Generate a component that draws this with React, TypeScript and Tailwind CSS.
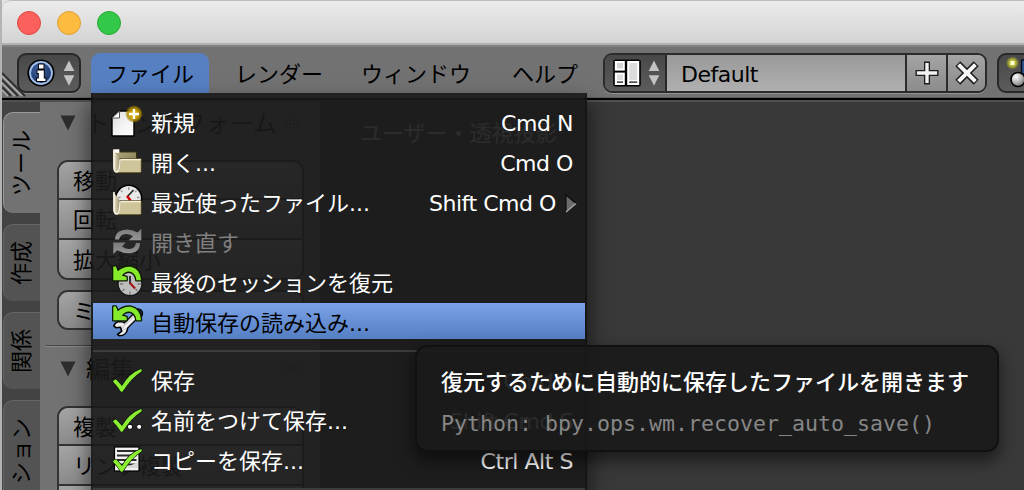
import React from "react";

type IconProps = { children: React.ReactNode };

const Icon = ({ children }: IconProps) => (
  <svg className="h-10 w-10 shrink-0" viewBox="0 0 40 40" fill="none">
    {children}
  </svg>
);

const Gradients = () => (
  <svg className="absolute h-0 w-0" aria-hidden="true">
    <defs>
      <linearGradient id="paper" x1="0" y1="0" x2="1" y2="1">
        <stop offset="0" stopColor="#d8d8d8" />
        <stop offset="0.5" stopColor="#f2f2f2" />
        <stop offset="1" stopColor="#ffffff" />
      </linearGradient>
      <linearGradient id="folderBack" x1="0" y1="0" x2="1" y2="1">
        <stop offset="0" stopColor="#b9af84" />
        <stop offset="1" stopColor="#857b55" />
      </linearGradient>
      <linearGradient id="flap" x1="0" y1="0" x2="1" y2="0">
        <stop offset="0" stopColor="#f3eedb" />
        <stop offset="1" stopColor="#9c926a" />
      </linearGradient>
      <linearGradient id="reload" x1="0" y1="0" x2="0" y2="1">
        <stop offset="0" stopColor="#7a7a7a" />
        <stop offset="1" stopColor="#969696" />
      </linearGradient>
      <radialGradient id="glow">
        <stop offset="0.4" stopColor="#d2a800" />
        <stop offset="0.75" stopColor="#a88500" stopOpacity="0.8" />
        <stop offset="1" stopColor="#8a6d00" stopOpacity="0" />
      </radialGradient>
      <radialGradient id="info" cx="0.4" cy="0.3" r="0.8">
        <stop offset="0" stopColor="#3c5f9c" />
        <stop offset="1" stopColor="#1c3566" />
      </radialGradient>
      <radialGradient id="ball" cx="0.35" cy="0.3" r="0.8">
        <stop offset="0" stopColor="#ffffff" />
        <stop offset="1" stopColor="#6e6e6e" />
      </radialGradient>
      <radialGradient id="lamp">
        <stop offset="0.3" stopColor="#c9c838" />
        <stop offset="0.6" stopColor="#a9a83a" />
        <stop offset="1" stopColor="#8a8930" stopOpacity="0.2" />
      </radialGradient>
    </defs>
  </svg>
);

const FolderFront = ({ dy = 0 }: { dy?: number }) => (
  <g transform={`translate(0 ${dy})`}>
    <path d="M6.3 7L12.8 15.5L12.5 26Q11 30.5 8 28.5Q6.3 27 6.3 24Z" fill="url(#flap)" />
    <path d="M13 15.7H34.3V28.5Q34.3 29.8 33 29.8H9.5Q13.5 28.5 13 15.7Z" fill="#cfc59b" stroke="#3b310a" strokeWidth="0.8" />
    <path d="M13.4 16.6H34" stroke="#f3efd9" strokeWidth="1.4" />
    <path d="M7 7V25Q7.3 29.5 10 29Q13 28 13 16.4" stroke="#f6f1de" strokeWidth="1.5" />
  </g>
);

const NewIcon = () => (
  <Icon>
    <path d="M12.5 8H27V33H5V15Z" fill="url(#paper)" stroke="#000" strokeWidth="1.4" />
    <path d="M12.5 8V15H5Z" fill="#fff" stroke="#555" strokeWidth="1" />
    <circle cx="27" cy="11" r="9" fill="url(#glow)" />
    <path d="M27 6V16M22 11H32" stroke="#fff" strokeWidth="2.4" />
  </Icon>
);

const FolderIcon = () => (
  <Icon>
    <path d="M6.3 6.5H12.3V9H29.5V20H6.3Z" fill="url(#folderBack)" stroke="#3b310a" strokeWidth="1" />
    <path d="M6.3 6.3H12.3V9.8H6.3Z" fill="#fff" />
    <FolderFront />
  </Icon>
);

const RecentIcon = () => (
  <Icon>
    <circle cx="21.7" cy="15.3" r="13" fill="#e8e8e8" stroke="#000" strokeWidth="1.6" />
    <path d="M21.7 4V7M11 14.5H13.5M30 14.5H32.5M13.8 7.5L15.5 9M29.7 7.5L28 9" stroke="#999" strokeWidth="1.3" />
    <path d="M20.5 13.5L26.5 7" stroke="#222" strokeWidth="1.6" />
    <path d="M20 13L23.5 17.5" stroke="#d40000" strokeWidth="2.6" />
    <FolderFront dy={2} />
  </Icon>
);

const ReloadIcon = () => (
  <Icon>
    <path
      d="M8 16.5Q8 11 12.5 8.3Q21 4 30.5 9.5L34.3 5.7V17.3H21.7L26 13.3Q20 9.5 15 12Q12.5 13.5 12 16.5Z"
      fill="url(#reload)"
    />
    <path
      d="M33 20Q33 26 28.5 28.8Q20 32.5 10.3 27.2L6.3 31V19.5H18.8L15 23.4Q21 27.5 26 25Q28.7 23.2 29 20Z"
      fill="url(#reload)"
    />
  </Icon>
);

const UndoArrow = () => (
  <path
    d="M6.3 3.5H8.8L10.8 8.2Q17 2.8 24 3.8Q33.5 6 34 17.3H29.4Q28.5 9.5 22.5 8.6Q18 8.4 14.8 12.4L19.6 14V17.3H6.3Z"
    fill="#86ea2c"
    stroke="#0c1a00"
    strokeWidth="2.6"
    strokeLinejoin="round"
    paintOrder="stroke"
  />
);

const SessionIcon = () => (
  <Icon>
    <circle cx="23" cy="20.7" r="12" fill="#bdbdbd" stroke="#161616" strokeWidth="1.4" />
    <path d="M23 28.5V32M13 21H16M30.5 21H34M15.5 28L17.5 26M30.5 28L28.5 26" stroke="#777" strokeWidth="1.3" />
    <path d="M23 13V21" stroke="#222" strokeWidth="1.8" />
    <path d="M23 20L28 25.5" stroke="#a81414" strokeWidth="2.2" />
    <UndoArrow />
  </Icon>
);

const WrenchIcon = () => (
  <Icon>
    <circle cx="31" cy="10.5" r="4.6" fill="#1a2440" stroke="#000" strokeWidth="1.2" />
    <path d="M17 24.5L29 12.5" stroke="#000" strokeWidth="7.4" strokeLinecap="round" />
    <path
      d="M6.8 23Q8.5 18.5 13 18.5Q20.5 19 20.5 26Q19.5 32.5 12.5 32.8L10.5 31.5L14.8 28.2L13.5 24.3L9 24.7Z"
      fill="#ececec"
      stroke="#000"
      strokeWidth="1.6"
      strokeLinejoin="round"
    />
    <path d="M17 24.5L30 11.5" stroke="#d4d4d4" strokeWidth="4.6" strokeLinecap="round" />
    <path d="M17 25.5L29.5 13" stroke="#fff" strokeWidth="1.3" />
    <UndoArrow />
  </Icon>
);

const Check = () => (
  <path
    d="M6 20.8Q7.5 17.6 9.7 19L15 25Q22 12.5 33.5 8.2Q35.6 8 34.3 10.4Q24 17 15.6 30.6Q14.6 31.2 13.8 30.4Q10.5 25 6 20.8Z"
    fill="#8bee32"
    stroke="#0b1800"
    strokeWidth="1.3"
    paintOrder="stroke"
  />
);

const SaveIcon = () => (
  <Icon>
    <Check />
  </Icon>
);

const SaveAsIcon = () => (
  <Icon>
    <Check />
    <circle cx="23" cy="25.8" r="2.6" fill="#fff" stroke="#000" strokeWidth="1" />
    <circle cx="32.2" cy="25.8" r="2.6" fill="#fff" stroke="#000" strokeWidth="1" />
  </Icon>
);

const SaveCopyIcon = () => (
  <Icon>
    <rect x="7.5" y="6" width="24.5" height="24" fill="#f2f2f2" stroke="#000" strokeWidth="1.2" />
    <path d="M10 10H29.5M10 14.5H29.5M10 19H29.5M10 23.5H29.5" stroke="#2b2b2b" strokeWidth="1.8" />
    <path d="M18 27H31V21Z" fill="#d8d8d8" />
    <Check />
  </Icon>
);

const Spinner = () => (
  <svg className="h-[26px] w-3 shrink-0" viewBox="0 0 12 26" fill="#c2c2c2">
    <path d="M6 0.5L11.3 11H0.7Z" />
    <path d="M6 25.8L11.3 15.3H0.7Z" />
  </svg>
);

const InfoIcon = () => (
  <svg className="h-7 w-7 shrink-0" viewBox="0 0 28 28">
    <circle cx="14" cy="14" r="13.6" fill="#000" />
    <circle cx="14" cy="14" r="11.9" fill="#9dbbe6" />
    <circle cx="14" cy="14" r="10" fill="url(#info)" />
    <path
      d="M12 5.5H16.5V9.5H12ZM10.5 11.5H16.8V19.5H18.5V22H10V19.5H11.8V14H10.5Z"
      fill="#fff"
      stroke="#000"
      strokeWidth="1.8"
      paintOrder="stroke"
    />
  </svg>
);

const ScreenIcon = () => (
  <svg className="h-7 w-7 shrink-0" viewBox="0 0 28 28">
    <rect x="0.2" y="0.5" width="27.6" height="27" rx="2" fill="#000" />
    <rect x="1.8" y="2" width="10" height="9.6" fill="#fff" />
    <rect x="1.8" y="13.6" width="10" height="12.4" fill="#fff" />
    <rect x="14.2" y="2" width="12" height="24" fill="#fff" />
    <rect x="4" y="4" width="6" height="5.5" fill="#d4d4d4" />
    <rect x="4" y="15.5" width="6" height="5.5" fill="#dedede" />
    <rect x="16.2" y="4" width="8" height="17" fill="#dcdcdc" />
    <path d="M4 23.2H10M16.2 23.2H24.2" stroke="#555" strokeWidth="1.8" />
  </svg>
);

const MenuTitle = ({ label, className }: { label: string; className: string }) => (
  <div className={`flex h-10 shrink-0 items-center pt-[4px] ${className}`}>{label}</div>
);

const Header = () => (
  <div className="flex h-[55px] shrink-0 flex-col overflow-hidden border-t-2 border-[#838383] bg-[#727272]">
    <div className="flex h-[50px] shrink-0 items-start pt-[6px]">
      <div className="ml-[15px] flex h-10 w-16 shrink-0 items-center gap-[8px] rounded-[9px] border-2 border-[#282828] bg-linear-to-b from-[#484848] to-[#5c5c5c] pl-2 shadow-[0_1px_0_#868686]">
        <InfoIcon />
        <Spinner />
      </div>
      <MenuTitle label="ファイル" className="ml-[10px] w-[118px] rounded-t-[9px] bg-[#5680c2] pl-[15px]" />
      <MenuTitle label="レンダー" className="ml-[26px] w-[126px]" />
      <MenuTitle label="ウィンドウ" className="w-[151px]" />
      <MenuTitle label="ヘルプ" className="w-[91px]" />
      <div className="flex h-10 w-[384px] shrink-0 overflow-hidden rounded-[9px] border-2 border-[#2b2b2b] shadow-[0_1px_0_#929292]">
        <div className="flex w-[62px] shrink-0 items-center gap-[7px] border-r-2 border-[#282828] bg-linear-to-b from-[#484848] to-[#5c5c5c] pl-2">
          <ScreenIcon />
          <Spinner />
        </div>
        <div className="flex w-[238px] shrink-0 items-center bg-linear-to-b from-[#999] to-[#b0b0b0] pl-[14px] pt-[4px] tracking-[-0.5px]">
          Default
        </div>
        <div className="flex w-[41px] shrink-0 items-center justify-center border-l-2 border-[#2b2b2b] bg-linear-to-b from-[#a4a4a4] to-[#8c8c8c]">
          <svg className="h-6 w-6" viewBox="0 0 24 24">
            <path d="M12 0.5V23.5M0.5 12H23.5" stroke="#1c1c1c" strokeWidth="6" />
            <path d="M12 1.9V22.1M1.9 12H22.1" stroke="#f2f2f2" strokeWidth="3.4" />
          </svg>
        </div>
        <div className="flex flex-1 items-center justify-center border-l-2 border-[#2b2b2b] bg-linear-to-b from-[#a4a4a4] to-[#8c8c8c]">
          <svg className="h-6 w-6" viewBox="0 0 24 24">
            <path d="M2.8 2.8L21.2 21.2M21.2 2.8L2.8 21.2" stroke="#1c1c1c" strokeWidth="7" />
            <path d="M3.6 3.6L20.4 20.4M20.4 3.6L3.6 20.4" stroke="#f5f5f5" strokeWidth="4" />
          </svg>
        </div>
      </div>
      <div className="ml-[10px] h-10 w-[60px] shrink-0 rounded-l-[9px] border-2 border-[#282828] bg-linear-to-b from-[#484848] to-[#5c5c5c]">
        <svg className="h-9 w-[26px]" viewBox="0 0 26 36">
          <circle cx="13.5" cy="8" r="6.5" fill="url(#lamp)" />
          <rect x="11.5" y="6" width="4" height="4" fill="#ffffd8" />
          <rect x="22.5" y="5" width="8" height="14" fill="#2d568f" stroke="#050d1e" strokeWidth="1.4" />
          <circle cx="19" cy="24.5" r="7" fill="url(#ball)" stroke="#000" strokeWidth="1.6" />
        </svg>
      </div>
    </div>
    <div className="h-[1px] shrink-0 bg-[#606060]" />
    <div className="h-[2px] shrink-0 bg-black" />
  </div>
);

const Tab = ({ label, className }: { label: string; className: string }) => (
  <div
    className={`flex w-[37px] shrink-0 items-center justify-center rounded-l-[10px] border-l border-t ${className}`}
  >
    <span className="rotate-180 leading-[22px] [text-orientation:sideways] [writing-mode:vertical-rl]">
      {label}
    </span>
  </div>
);

const PanelHeader = ({ label, className }: { label: string; className: string }) => (
  <div className={`flex items-center ${className}`}>
    <svg className="h-4 w-4 shrink-0" viewBox="0 0 16 16">
      <path d="M0.5 0.5H15.5L8 15.5Z" fill="#2d2d2d" />
    </svg>
    <span className="ml-[10px] w-[198px] shrink-0 whitespace-nowrap pt-[2px] text-[24px] leading-6">{label}</span>
    <svg className="h-2 w-4 shrink-0" viewBox="0 0 16 8" fill="#3c3c3c">
      <path d="M1 0h2v2h-2zM5 0h2v2h-2zM9 0h2v2h-2zM13 0h2v2h-2zM1 4h2v2h-2zM5 4h2v2h-2zM9 4h2v2h-2zM13 4h2v2h-2z" />
    </svg>
  </div>
);

const ToolGroup = ({ labels, className }: { labels: string[]; className: string }) => (
  <div
    className={`ml-[17px] w-[247px] divide-y-2 divide-[#333] overflow-hidden rounded-[11px] border-2 border-[#333] ${className}`}
  >
    {labels.map((label) => (
      <div
        key={label}
        className="flex h-10 items-center bg-linear-to-b from-[#a5a5a5] to-[#8b8b8b] pl-[14px] pt-[3px] first:h-[38px] last:h-[38px] only:h-9"
      >
        {label}
      </div>
    ))}
  </div>
);

const ToolShelf = () => (
  <div className="flex w-[318px] shrink-0">
    <div className="flex w-[38px] shrink-0 flex-col gap-[11px] bg-[#434343] pl-px pt-[10px]">
      <Tab label="ツール" className="h-[101px] border-[#989898] bg-[#727272]" />
      <Tab label="作成" className="h-[77px] border-[#666] bg-[#535353]" />
      <Tab label="関係" className="h-[77px] border-[#666] bg-[#535353]" />
      <Tab label="ション" className="h-[101px] border-[#666] bg-[#535353]" />
    </div>
    <div className="flex-1 border-r border-[#5a5a5a] bg-[#727272]">
      <PanelHeader label="トランスフォーム" className="h-[58px] pb-[16px] pl-[20px]" />
      <ToolGroup labels={["移動", "回転", "拡大縮小"]} className="" />
      <ToolGroup labels={["ミラー"]} className="mt-[10px]" />
      <div className="ml-[6px] mr-[6px] mt-[15px] h-[2px] border-t border-[#444] bg-[#8b8b8b]" />
      <PanelHeader label="編集" className="h-[59px] pb-[16px] pl-[20px]" />
      <ToolGroup labels={["複製", "リンク複製", "削除"]} className="" />
    </div>
  </div>
);

type Item = {
  label: string;
  shortcut?: string;
  icon: React.ReactNode;
  state?: "active" | "disabled";
  submenu?: boolean;
};

const groups: Item[][] = [
  [
    { label: "新規", shortcut: "Cmd N", icon: <NewIcon /> },
    { label: "開く...", shortcut: "Cmd O", icon: <FolderIcon /> },
    { label: "最近使ったファイル...", shortcut: "Shift Cmd O", icon: <RecentIcon />, submenu: true },
    { label: "開き直す", icon: <ReloadIcon />, state: "disabled" },
    { label: "最後のセッションを復元", icon: <SessionIcon /> },
    { label: "自動保存の読み込み...", icon: <WrenchIcon />, state: "active" },
  ],
  [
    { label: "保存", shortcut: "Cmd S", icon: <SaveIcon /> },
    { label: "名前をつけて保存...", shortcut: "Shift Cmd S", icon: <SaveAsIcon /> },
    { label: "コピーを保存...", shortcut: "Ctrl Alt S", icon: <SaveCopyIcon /> },
  ],
];

const rowTone = {
  normal: "h-10 text-white",
  active: "mb-1 h-9 bg-linear-to-b from-[#7ba2e7] to-[#557fc3] text-black",
  disabled: "h-10 text-[#808080]",
};

const MenuRow = ({ item }: { item: Item }) => (
  <div className={`flex items-start pl-[14px] ${rowTone[item.state ?? "normal"]}`}>
    {item.icon}
    <span className="ml-1 flex-1 whitespace-nowrap pt-px leading-10">{item.label}</span>
    {item.shortcut && (
      <span className={`pt-px leading-10 tracking-[-0.45px] ${item.submenu ? "" : "pr-[12px]"}`}>
        {item.shortcut}
      </span>
    )}
    {item.submenu && (
      <svg className="ml-[9px] mr-[8px] mt-[11px] h-[19px] w-3" viewBox="0 0 12 19">
        <path d="M1 1L11 9.5L1 18Z" fill="#6c6c6c" />
        <path d="M1 18V1L11 9.5" stroke="#0c0c0c" strokeWidth="1.2" fill="none" />
        <path d="M1 18L11 9.5" stroke="#a5a5a5" strokeWidth="1.4" />
      </svg>
    )}
  </div>
);

const FileMenu = () => (
  <div className="absolute left-[91px] top-[93px] h-[420px] w-[496px] border-2 border-t-0 border-[#131313]/90 bg-[#1a1a1a]/[0.91] bg-clip-padding pt-[10px] shadow-[0_12px_20px_2px_rgba(0,0,0,0.55)]">
    {groups.map((items, index) => (
      <div key={index}>
        {items.map((item) => (
          <MenuRow key={item.label} item={item} />
        ))}
        <div className="flex h-[18px] flex-col pt-[7px]">
          <div className="h-[2px] bg-[#3c3c3c]" />
        </div>
      </div>
    ))}
  </div>
);

const Tooltip = () => (
  <div className="absolute left-[415px] top-[345px] h-[107px] w-[584px] whitespace-nowrap rounded-[12px] border-2 border-[#111] bg-[#1a1a1a]/[0.93] pl-6 pt-[18px] shadow-[0_8px_16px_1px_rgba(0,0,0,0.5)]">
    <div className="h-[34px] pt-px font-medium leading-[34px] text-white">
      復元するために自動的に保存したファイルを開きます
    </div>
    <div className="mt-[7px] pt-px font-['DejaVu_Sans_Mono',monospace] text-[21.6px] leading-[34px] text-[#868686]">
      Python: bpy.ops.wm.recover_auto_save()
    </div>
  </div>
);

const TitleBar = () => (
  <div className="flex h-[45px] shrink-0 items-center gap-4 rounded-tl-[9px] border-b-2 border-t border-b-[#b2b2b2] border-t-[#bdbdbd] bg-linear-to-b from-[#ececec] to-[#d3d3d3] pl-[15px] pt-[2px]">
    <div className="h-6 w-6 rounded-full border border-[#df4744] bg-[#fc605c]" />
    <div className="h-6 w-6 rounded-full border border-[#de9f34] bg-[#fdbc40]" />
    <div className="h-6 w-6 rounded-full border border-[#27aa35] bg-[#34c84a]" />
  </div>
);

const ResizeCorner = () => (
  <svg className="absolute left-[2px] top-[72px] h-[25px] w-[24px]" viewBox="0 0 24 25" fill="none">
    <path d="M0 1L23 24M0 8L16 24M0 15L9 24" stroke="#2f2f2f" strokeWidth="1.8" />
    <path d="M0 4L20 24M0 11L13 24M0 18L6 24" stroke="#b0b0b0" strokeWidth="1.4" />
  </svg>
);

export default function App() {
  return (
    <div className="relative flex h-[490px] w-[1024px] flex-col overflow-hidden border-l-2 border-[#b4b4b4] bg-[#e3e3e3] font-['DejaVu_Sans','Noto_Sans_CJK_JP',sans-serif] text-[22px] leading-none text-black">
      <Gradients />
      <TitleBar />
      <Header />
      <div className="h-[2px] shrink-0 bg-[#505050]" />
      <div className="flex h-[388px] shrink-0 overflow-hidden bg-[#393939]">
        <ToolShelf />
        <div className="flex-1 pl-[40px] pt-[20px] leading-6 text-[#d8d8d8]">ユーザー・透視投影</div>
      </div>
      <div className="absolute -left-[2px] top-0">
        <ResizeCorner />
        <FileMenu />
        <Tooltip />
      </div>
    </div>
  );
}
